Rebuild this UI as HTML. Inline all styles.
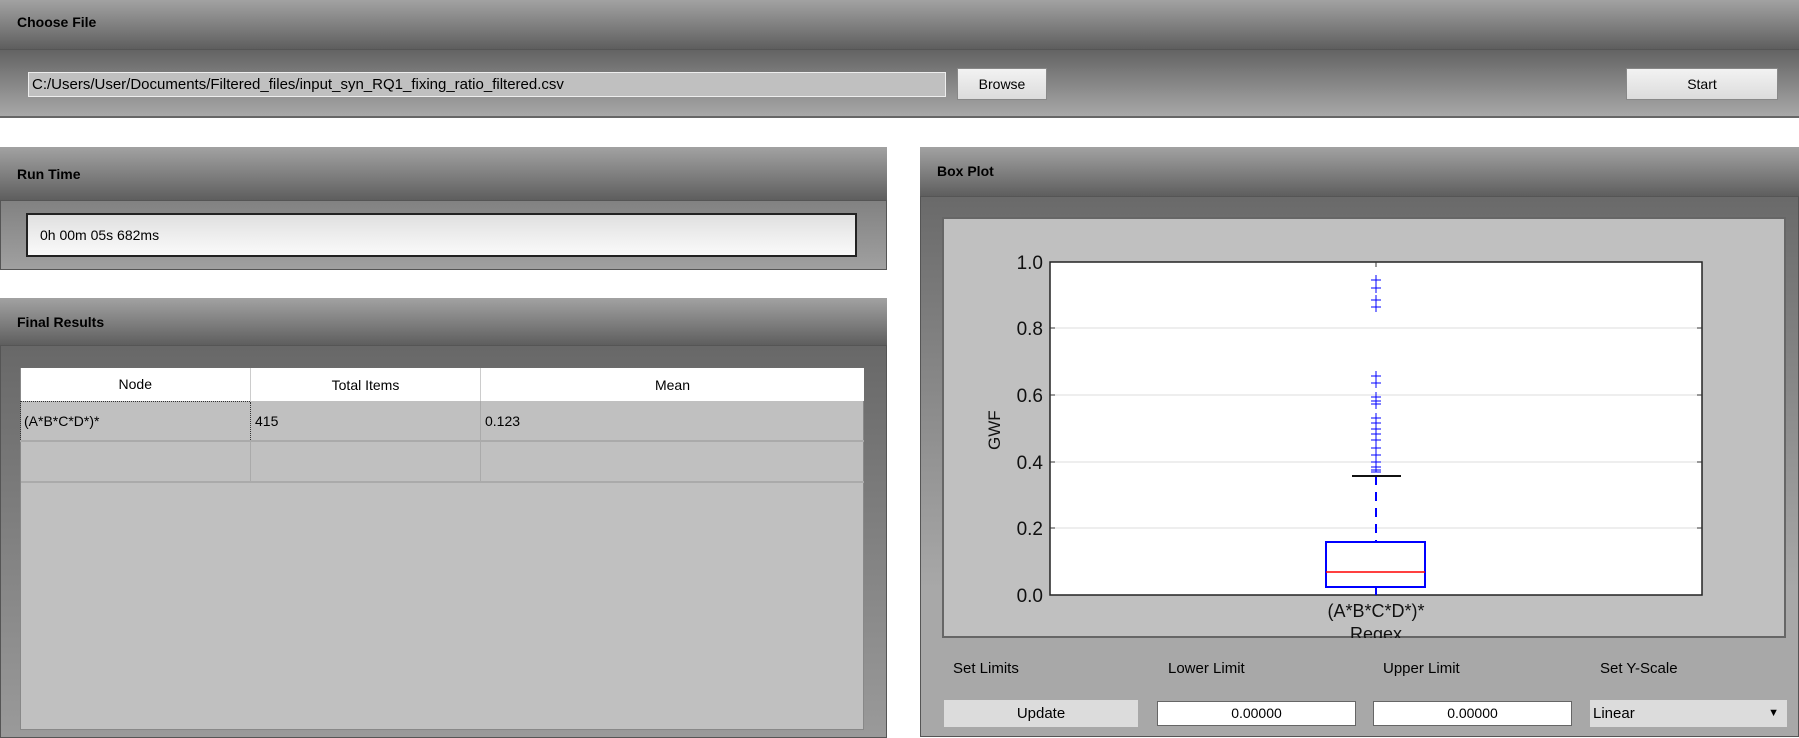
<!DOCTYPE html>
<html><head><meta charset="utf-8"><style>
*{margin:0;padding:0;box-sizing:border-box}
body{width:1799px;height:730px;background:#fff;position:relative;overflow:hidden;font-family:"Liberation Sans",sans-serif;font-size:14px;color:#000}
.abs{position:absolute}
.hdr{background:linear-gradient(#a2a2a2,#7a7a7a 60%,#5e5e5e);font-weight:bold;font-size:14px;padding-left:17px;border-bottom:1px solid #555}
.btn{background:linear-gradient(#f2f2f2,#dcdcdc);border:1px solid #888;text-align:center;font-size:14px}
.inp{background:#fff;border:1px solid #666;text-align:center;font-size:14px}
table{border-collapse:collapse;font-size:14px}
</style></head><body>
<div class="abs hdr" style="left:0;top:0;width:1799px;height:50px;line-height:44px">Choose File</div>
<div class="abs" style="left:0;top:50px;width:1799px;height:68px;background:linear-gradient(#636363,#a8a8a8);border-bottom:2px solid #666"></div>
<div class="abs" style="left:28px;top:72px;width:918px;height:25px;background:#c0c0c0;border:1px solid #eee;line-height:23px;padding-left:3px;font-size:15px">C:/Users/User/Documents/Filtered_files/input_syn_RQ1_fixing_ratio_filtered.csv</div>
<div class="abs btn" style="left:957px;top:68px;width:90px;height:32px;line-height:30px">Browse</div>
<div class="abs btn" style="left:1626px;top:68px;width:152px;height:32px;line-height:30px">Start</div>

<div class="abs" style="left:0;top:147px;width:887px;height:123px;border:1px solid #555;background:linear-gradient(#6a6a6a,#a0a0a0)"></div>
<div class="abs hdr" style="left:0;top:147px;width:887px;height:54px;line-height:54px">Run Time</div>
<div class="abs" style="left:26px;top:213px;width:831px;height:44px;background:linear-gradient(#e0e0e0,#fafafa);border:2px solid #222;line-height:40px;padding-left:12px;font-size:14px">0h 00m 05s 682ms</div>

<div class="abs" style="left:0;top:298px;width:887px;height:440px;border:1px solid #555;background:linear-gradient(#626262,#9a9a9a)"></div>
<div class="abs hdr" style="left:0;top:298px;width:887px;height:48px;line-height:48px">Final Results</div>
<div class="abs" style="left:20px;top:368px;width:844px;height:362px;background:#c0c0c0;border:1px solid #888"></div>
<table class="abs" style="left:20px;top:368px;width:844px">
<tr style="height:33px;background:#fff"><td style="width:230px;text-align:center;border-right:1px solid #ccc">Node</td><td style="width:230px;text-align:center;border-right:1px solid #ccc">Total Items</td><td style="text-align:center">Mean</td></tr>
<tr style="height:40px;border-bottom:2px solid #aaa"><td style="padding-left:3px;border:1px dotted #333">(A*B*C*D*)*</td><td style="padding-left:4px;border-right:1px solid #aaa">415</td><td style="padding-left:4px">0.123</td></tr>
<tr style="height:41px;border-bottom:2px solid #aaa"><td style="border-right:1px solid #aaa"></td><td style="border-right:1px solid #aaa"></td><td></td></tr>
</table>

<div class="abs" style="left:920px;top:147px;width:879px;height:590px;border:1px solid #555;background:linear-gradient(#626262,#a8a8a8 75%,#a8a8a8)"></div>
<div class="abs hdr" style="left:920px;top:147px;width:879px;height:50px;line-height:48px">Box Plot</div>
<div class="abs" style="left:942px;top:217px;width:844px;height:421px;background:#c0c0c0;border:2px solid #666"></div>
<svg class="abs" style="left:942px;top:217px" width="844" height="421" font-family="Liberation Sans, sans-serif">
<g transform="translate(-942,-217)">
<rect x="1050" y="262" width="652" height="333" fill="#fff" stroke="#222" stroke-width="1.5"/>
<g stroke="#ddd"><line x1="1050" x2="1702" y1="328" y2="328"/><line x1="1050" x2="1702" y1="395" y2="395"/><line x1="1050" x2="1702" y1="462" y2="462"/><line x1="1050" x2="1702" y1="528" y2="528"/></g>
<g stroke="#333"><path d="M1050 328h5M1050 395h5M1050 462h5M1050 528h5M1702 328h-5M1702 395h-5M1702 462h-5M1702 528h-5M1376 262v5"/></g>
<g font-size="19" text-anchor="end" fill="#111">
<text x="1043" y="269">1.0</text><text x="1043" y="335">0.8</text><text x="1043" y="402">0.6</text><text x="1043" y="469">0.4</text><text x="1043" y="535">0.2</text><text x="1043" y="602">0.0</text></g>
<text x="0" y="0" font-size="17" transform="translate(1000,450) rotate(-90)" fill="#111">GWF</text>
<line x1="1376" x2="1376" y1="476" y2="542" stroke="#00f" stroke-width="2" stroke-dasharray="9,7"/>
<line x1="1376" x2="1376" y1="587" y2="595" stroke="#00f" stroke-width="2"/>
<line x1="1352" x2="1401" y1="476" y2="476" stroke="#111" stroke-width="2"/>
<rect x="1326" y="542" width="99" height="45" fill="none" stroke="#00f" stroke-width="2"/>
<line x1="1326" x2="1425" y1="572" y2="572" stroke="#f00" stroke-width="1.5"/>
<g stroke="#00f" stroke-width="1">
<path d="M1371 280h10M1376 275v10M1371 288h10M1376 283v10M1371 300h10M1376 295v10M1371 307h10M1376 302v10M1371 376h10M1376 371v10M1371 383h10M1376 378v10M1371 397h10M1376 392v10M1371 401h10M1376 396v10M1371 404h10M1376 399v10M1371 418h10M1376 413v10M1371 423h10M1376 418v10M1371 429h10M1376 424v10M1371 434h10M1376 429v10M1371 440h10M1376 435v10M1371 448h10M1376 443v10M1371 455h10M1376 450v10M1371 462h10M1376 457v10M1371 467h10M1376 462v10M1371 470h10M1371 472h10"/>
</g>
<text x="1376" y="617" font-size="18" text-anchor="middle" fill="#111">(A*B*C*D*)*</text>
<text x="1376" y="640" font-size="18" text-anchor="middle" fill="#111">Regex</text>
</g></svg>
<div class="abs" style="left:953px;top:660px;font-size:15px">Set Limits</div>
<div class="abs" style="left:1168px;top:660px;font-size:15px">Lower Limit</div>
<div class="abs" style="left:1383px;top:660px;font-size:15px">Upper Limit</div>
<div class="abs" style="left:1600px;top:660px;font-size:15px">Set Y-Scale</div>
<div class="abs" style="left:944px;top:700px;width:194px;height:27px;background:#dcdcdc;text-align:center;line-height:27px;font-size:15px">Update</div>
<div class="abs inp" style="left:1157px;top:701px;width:199px;height:25px;line-height:23px">0.00000</div>
<div class="abs inp" style="left:1373px;top:701px;width:199px;height:25px;line-height:23px">0.00000</div>
<div class="abs" style="left:1590px;top:700px;width:197px;height:27px;background:#dcdcdc;line-height:27px;padding-left:3px;font-size:15px">Linear<span style="position:absolute;right:8px;font-size:11px">▼</span></div>
</body></html>
